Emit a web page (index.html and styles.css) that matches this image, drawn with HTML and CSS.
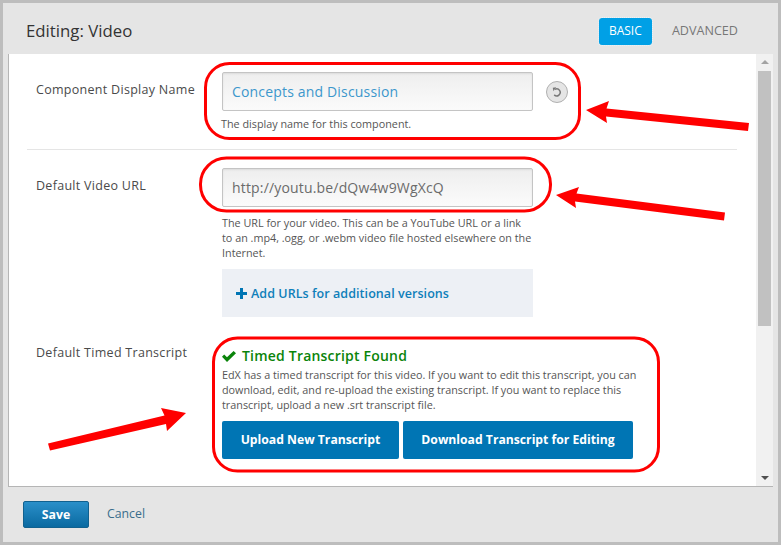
FILE: index.html
```html
<!DOCTYPE html>
<html lang="en">
<head>
<meta charset="utf-8">
<title>Editing: Video</title>
<link rel="stylesheet" href="styles.css">
</head>
<body>
<div class="modal">
  <header class="modal-header">
    <h1 class="title">Editing: Video</h1>
    <nav class="tabs">
      <a class="tab tab-active">BASIC</a>
      <a class="tab tab-plain">ADVANCED</a>
    </nav>
  </header>
  <main class="content">
    <div class="form">
      <section class="row row-name">
        <label class="label">Component Display Name</label>
        <div class="field">
          <div class="input-line">
            <div class="input input-set">Concepts and Discussion</div>
            <button class="reset" aria-label="Reset">
              <svg width="12" height="12" viewBox="0 0 12 12"><path d="M4 3.300A3.500 3.500 0 1 1 3.200 8.900" fill="none" stroke="#787878" stroke-width="1.500"/><path d="M5.200 1.200 1.800 1.800 2.400 5.200z" fill="#787878"/></svg>
            </button>
          </div>
          <p class="help help-name">The display name for this component.</p>
        </div>
      </section>
      <section class="row row-url">
        <label class="label">Default Video URL</label>
        <div class="field">
          <div class="input">http://youtu.be/dQw4w9WgXcQ</div>
          <p class="help help-url">The URL for your video. This can be a YouTube URL or a link to an .mp4, .ogg, or .webm video file hosted elsewhere on the Internet.</p>
          <div class="add-box">
            <a class="add-link"><svg class="plus" width="11" height="11" viewBox="0 0 11 11"><path d="M4 0h3v4h4v3H7v4H4V7H0V4h4z" fill="#0075b4"/></svg>Add URLs for additional versions</a>
          </div>
        </div>
      </section>
      <section class="row row-transcript">
        <label class="label">Default Timed Transcript</label>
        <div class="field field-wide">
          <h2 class="found"><svg class="check" width="14" height="11" viewBox="0 0 14 11"><path d="M0 5.800 2.200 3.500 5 6.300 11.600 0 14 2.300 5 11z" fill="#0a840a"/></svg>Timed Transcript Found</h2>
          <p class="help help-found">EdX has a timed transcript for this video. If you want to edit this transcript, you can download, edit, and re-upload the existing transcript. If you want to replace this transcript, upload a new .srt transcript file.</p>
          <div class="actions">
            <a class="action action-upload">Upload New Transcript</a>
            <a class="action action-download">Download Transcript for Editing</a>
          </div>
        </div>
      </section>
    </div>
    <div class="scrollbar">
      <span class="arrow arrow-up"></span>
      <span class="thumb"></span>
      <span class="arrow arrow-down"></span>
    </div>
  </main>
  <footer class="modal-footer">
    <a class="save">Save</a>
    <a class="cancel">Cancel</a>
  </footer>
  <svg class="marks" width="781" height="545" viewBox="0 0 781 545">
    <g fill="none" stroke="#f00" stroke-width="3">
      <rect x="205.500" y="63.500" width="374" height="75" rx="24"/>
      <rect x="200.500" y="158" width="350" height="53" rx="26"/>
      <rect x="213.500" y="338" width="445" height="133" rx="24"/>
    </g>
    <g fill="#f00">
      <path d="M586 110 609 101 606.500 108.500 749 123 748 131 606 116.500 607 123z"/>
      <path d="M556 195 579 187 576.500 193.500 725 212.500 724 220.500 575 201.500 576 208z"/>
      <path d="M186 413 161 408 164.500 415.500 48 443.500 50 450.500 166 424 167 431z"/>
    </g>
  </svg>
</div>
</body>
</html>
```

FILE: styles.css
```css
* { box-sizing: border-box; }
html, body { margin: 0; padding: 0; }
body { width: 781px; height: 545px; overflow: hidden; font-family: "Open Sans", sans-serif; color: #4a4a4a; }
.modal { position: relative; width: 781px; height: 545px; border: 3px solid #bdbdbd; background: #e5e5e5; display: flex; flex-direction: column; }
.modal-header { height: 51px; flex: none; display: flex; justify-content: space-between; padding: 15px 40px 0 23px; }
.title { margin: 0; font-size: 16.800px; line-height: 26px; font-weight: 400; color: #333; }
.tabs { display: flex; gap: 20px; align-items: flex-start; }
.tab { font-size: 12.600px; line-height: 25px; color: #777; }
.tab-active { width: 53px; height: 27px; text-align: center; font-size: 12px; color: #fff; background: #00a0e6; border-radius: 3px; outline: 1px dotted #e8f4fa; }
.content { height: 433px; flex: none; margin: 0 5px; display: flex; border-left: 1px solid #b5b5b5; border-bottom: 1px solid #b5b5b5; background: #fff; }
.form { flex: 1; min-width: 0; padding: 0 19px 0 18px; overflow: hidden; }
.row { display: grid; grid-template-columns: 195px 1fr; }
.label { padding: 0 0 0 9px; font-size: 12.500px; line-height: 18px; letter-spacing: .29px; color: #4a4a4a; }
.row-name { height: 96px; padding-top: 18px; border-bottom: 1px solid #e5e5e5; }
.row-name .label { padding-top: 9px; }
.row-url { padding-top: 18px; height: 188px; }
.row-url .label { padding-top: 9px; }
.row-transcript { padding-top: 6px; }
.input-line { display: flex; align-items: center; gap: 13px; }
.input { width: 311px; height: 39px; padding-left: 9px; font-size: 14px; line-height: 38px; color: #6b6b6b; letter-spacing: .17px; border: 1px solid #c4c4c4; border-radius: 2px; background: linear-gradient(#eeeeee, #fbfbfb); box-shadow: inset 0 1px 2px rgba(0,0,0,.08); }
.input-set { color: #3c97cc; }
.reset { width: 22px; height: 22px; padding: 0; border: 1px solid #b0b0b0; border-radius: 50%; background: #e5e5e5; display: flex; align-items: center; justify-content: center; }
.help { margin: 0; font-size: 10.800px; line-height: 15px; color: #555; }
.help-name { margin: 5px 0 0 -1px; }
.help-url { width: 311px; margin-top: 8px; }
.add-box { width: 311px; height: 48px; margin-top: 9px; background: #edf0f5; display: flex; align-items: center; padding-left: 14px; }
.add-link { font-size: 12.500px; letter-spacing: .06px; font-weight: 600; color: #0f7fba; display: flex; align-items: center; gap: 4px; }
.found { margin: 0; font-size: 14px; line-height: 20px; font-weight: 600; color: #0a840a; display: flex; align-items: center; gap: 6px; letter-spacing: .2px; }
.field-wide { width: 420px; padding-top: 2px; }
.help-found { margin-top: 1px; width: 420px; }
.actions { display: flex; gap: 4px; margin-top: 9px; }
.action { height: 38px; font-size: 12.200px; line-height: 37px; font-weight: 700; text-align: center; color: #fff; background: #0075b4; border-radius: 2px; }
.action-upload { width: 177px; }
.action-download { width: 230px; }
.scrollbar { position: relative; width: 17px; flex: none; background: #f1f1f1; display: flex; flex-direction: column; align-items: center; }
.arrow { width: 0; height: 0; border-left: 4px solid transparent; border-right: 4px solid transparent; }
.arrow-up { margin-top: 6px; border-bottom: 4px solid #a3a3a3; }
.thumb { width: 13px; height: 255px; margin-top: 7px; background: #c1c1c1; }
.arrow-down { margin-top: auto; margin-bottom: 6px; border-top: 4px solid #505050; }
.modal-footer { flex: 1; display: flex; align-items: flex-start; padding: 14px 0 0 20px; }
.save { width: 66px; height: 27px; font-size: 12.300px; font-weight: 700; line-height: 25px; text-align: center; color: #fff; border: 1px solid #11618f; border-radius: 2px; background: linear-gradient(#2a8fc9, #0a6aa1); }
.cancel { margin-left: 18px; font-size: 12.300px; line-height: 25px; color: #3a6d8c; }
.marks { position: absolute; left: -3px; top: -3px; pointer-events: none; }
```
